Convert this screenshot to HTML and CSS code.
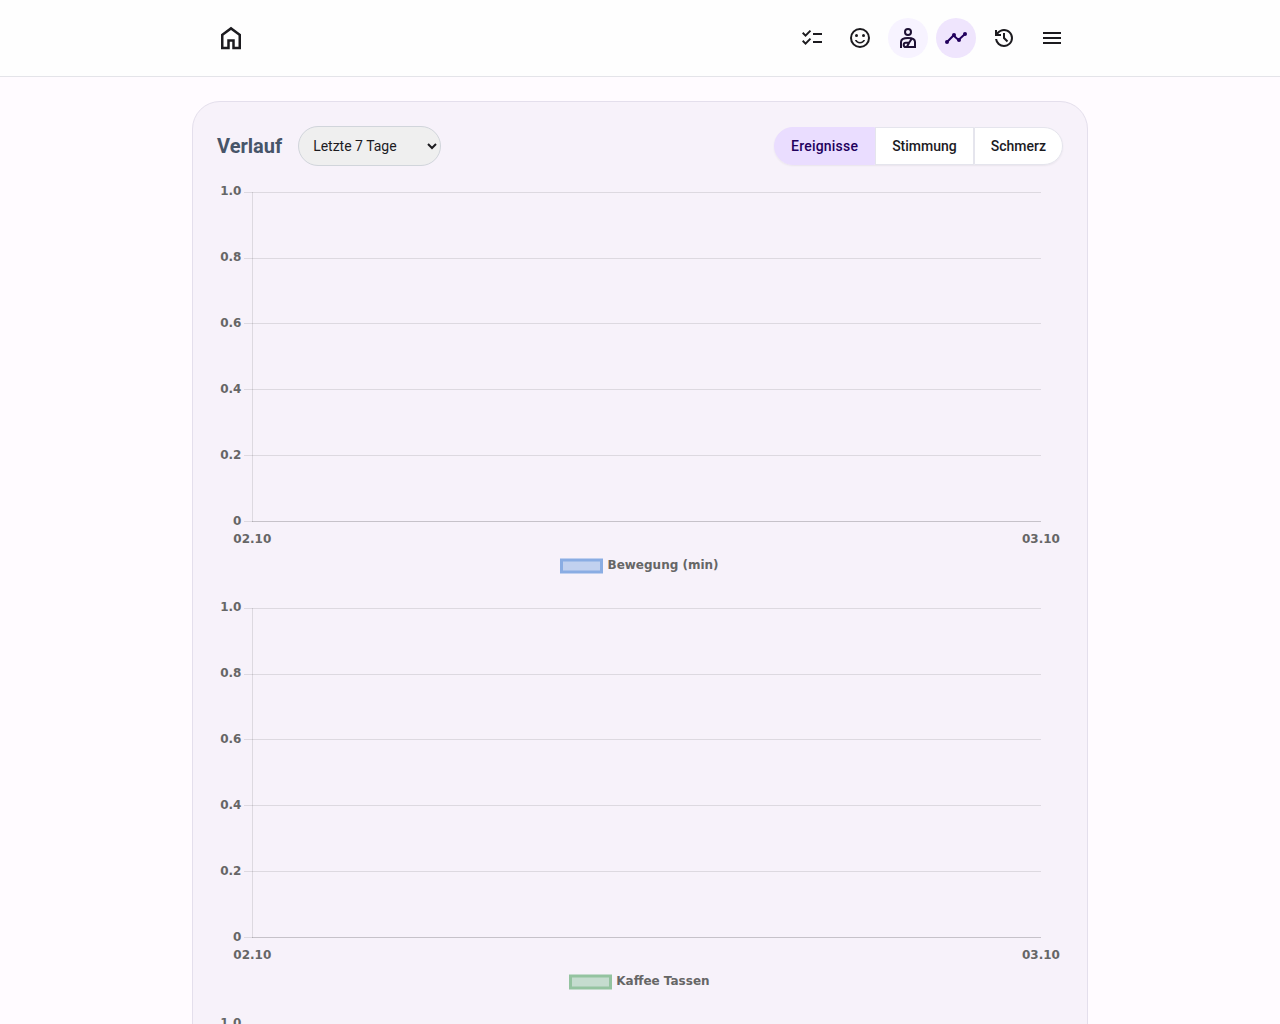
FILE: index.html
```html
<!DOCTYPE html>
<html lang="de">
<head>
<meta charset="utf-8">
<title>Verlauf</title>
<link rel="stylesheet" href="styles.css">
</head>
<body>
<header class="topbar">
  <nav class="nav">
    <a class="home" aria-label="Start"><svg width="30" height="30" viewBox="0 -960 960 960"><path d="M240-200h120v-240h240v240h120v-360L480-740 240-560v360Zm-80 80v-480l320-240 320 240v480H520v-240h-80v240H160Z"/></svg></a>
    <div class="actions">
      <a class="icon"><svg viewBox="0 -960 960 960"><path d="M222-200 80-342l56-56 85 85 170-170 56 57-225 226Zm0-320L80-662l56-56 85 85 170-170 56 57-225 226Zm298 240v-80h360v80H520Zm0-320v-80h360v80H520Z"/></svg></a>
      <a class="icon"><svg viewBox="0 0 24 24"><circle class="line" cx="12" cy="12" r="9"/><circle cx="8.5" cy="9.5" r="1.5"/><circle cx="15.5" cy="9.5" r="1.5"/><path d="M12 17.5c2.33 0 4.3-1.46 5.1-3.5h-1.65a4 4 0 0 1-6.9 0H6.9c.8 2.04 2.77 3.5 5.1 3.5z"/></svg></a>
      <a class="icon hovered"><svg viewBox="0 0 24 24"><circle class="line" cx="12" cy="6" r="3"/><path class="line" d="M5 22v-6c0-2.5 3-4 7-4s7 1.500 7 4v5H9.800a1.800 1.800 0 0 1 0-4.200H13L15.600 13M13 17l-2.200 4"/></svg></a>
      <a class="icon current"><svg viewBox="0 0 24 24"><path class="line" d="M3 16 9.500 9.500l5 4.500L21 8"/><circle cx="3" cy="16" r="2"/><circle cx="10" cy="9" r="2"/><circle cx="15" cy="14" r="2"/><circle cx="21" cy="8" r="2"/></svg></a>
      <a class="icon"><svg viewBox="0 -960 960 960"><path d="M480-120q-138 0-240.500-91.500T122-440h82q14 104 92.500 172T480-200q117 0 198.500-81.500T760-480q0-117-81.500-198.500T480-760q-69 0-129 32t-101 88h110v80H120v-240h80v94q51-64 124.500-99T480-840q75 0 140.500 28.500t114 77q48.500 48.500 77 114T840-480q0 75-28.500 140.500t-77 114q-48.500 48.500-114 77T480-120Zm112-192L440-464v-216h80v184l128 128-56 56Z"/></svg></a>
      <a class="icon"><svg viewBox="0 0 24 24"><path d="M3 18v-2h18v2zM3 13v-2h18v2zM3 8V6h18v2z"/></svg></a>
    </div>
  </nav>
</header>
<main class="card">
  <div class="toolbar">
    <div class="heading">
      <h1>Verlauf</h1>
      <select class="range"><option>Letzte 7 Tage</option><option>Letzte 30 Tage</option></select>
    </div>
    <div class="tabs"><button class="tab selected">Ereignisse</button><button class="tab">Stimmung</button><button class="tab">Schmerz</button></div>
  </div>
  <svg class="chart" viewBox="0 0 846 400">
    <path class="grid" d="M27 10.500H824M27 76.500H824M27 141.500H824M27 207.500H824M27 273.500H824M27 339.500H824M35.500 10V340"/>
    <path class="grid" d="M35 339.500H824"/>
    <g class="end"><text x="24.400" y="13">1.0</text><text x="24.400" y="79">0.8</text><text x="24.400" y="145">0.6</text><text x="24.400" y="211">0.4</text><text x="24.400" y="277">0.2</text><text x="24.400" y="343">0</text></g>
    <g class="mid"><text x="35.300" y="361">02.10</text><text x="824" y="361">03.10</text></g>
    <rect class="key blue" x="344.500" y="378" width="40" height="12"/><text x="390.500" y="387">Bewegung (min)</text>
  </svg>
  <svg class="chart" viewBox="0 0 846 400">
    <path class="grid" d="M27 10.500H824M27 76.500H824M27 141.500H824M27 207.500H824M27 273.500H824M27 339.500H824M35.500 10V340"/>
    <path class="grid" d="M35 339.500H824"/>
    <g class="end"><text x="24.400" y="13">1.0</text><text x="24.400" y="79">0.8</text><text x="24.400" y="145">0.6</text><text x="24.400" y="211">0.4</text><text x="24.400" y="277">0.2</text><text x="24.400" y="343">0</text></g>
    <g class="mid"><text x="35.300" y="361">02.10</text><text x="824" y="361">03.10</text></g>
    <rect class="key green" x="353.500" y="378" width="40" height="12"/><text x="399.300" y="387">Kaffee Tassen</text>
  </svg>
  <svg class="chart" viewBox="0 0 846 400">
    <path class="grid" d="M27 10.500H824M35.500 10V340"/>
    <g class="end"><text x="24.400" y="13">1.0</text></g>
  </svg>
</main>
</body>
</html>
```
FILE: styles.css
```css
* { box-sizing: border-box; }
html { height: 100%; overflow: hidden; }
body { margin: 0; height: 100%; overflow: hidden; background: #fffbff; color: #1c1b1f; font-family: Roboto, sans-serif; }
.topbar { height: 77px; background: #fefefe; border-bottom: 1px solid #e4e4e9; }
.nav { width: 864px; height: 76px; margin: 0 auto; padding-left: 8px; display: flex; align-items: center; justify-content: space-between; }
.home svg { display: block; }
.actions { display: flex; gap: 8px; }
.icon { width: 40px; height: 40px; border-radius: 50%; display: grid; place-items: center; }
.icon svg { width: 24px; height: 24px; overflow: visible; }
svg { fill: currentColor; }
.line { fill: none; stroke: currentColor; stroke-width: 2; }
.hovered { background: #f7f3ff; color: #1d1033; }
.current { background: #efe5fd; color: #22005d; }
.card { width: 896px; margin: 24px auto 0; padding: 24px; background: #f7f2fa; border: 1px solid #e4dfec; border-radius: 28px; }
.toolbar { height: 40px; margin-bottom: 16px; display: flex; align-items: center; justify-content: space-between; }
.heading { display: flex; align-items: center; gap: 16px; }
h1 { margin: 0; font-size: 20px; line-height: 28px; font-weight: 700; color: #475569; }
.range { width: 143px; height: 40px; padding: 0 0 0 10px; border: 1px solid #d1d5db; border-radius: 20px; background: #efefef; color: #1c1b1f; font: 14px Roboto, sans-serif; }
.tabs { display: flex; height: 38px; border-radius: 19px; box-shadow: 0 1px 2px rgba(0, 0, 0, .06); }
.tab { height: 38px; padding: 0 16px; border: 1px solid #e5e5ed; background: #fff; color: #1c1b1f; font: 500 14px Roboto, sans-serif; }
.tab:first-child { border-radius: 19px 0 0 19px; }
.tab:last-child { border-radius: 0 19px 19px 0; }
.tab.selected { background: #eaddff; border-color: #eaddff; color: #22005d; letter-spacing: .2px; }
.chart { display: block; width: 846px; height: 400px; margin-bottom: 16px; font: bold 12px "DejaVu Sans", sans-serif; fill: #666; }
.grid { fill: none; stroke: rgba(0, 0, 0, .1); stroke-width: 1; }
.end { text-anchor: end; }
.mid { text-anchor: middle; }
.key { stroke-width: 3; }
.blue { fill: #c1d1ef; stroke: #8aade3; }
.green { fill: #c5dccf; stroke: #94c3a0; }
```
